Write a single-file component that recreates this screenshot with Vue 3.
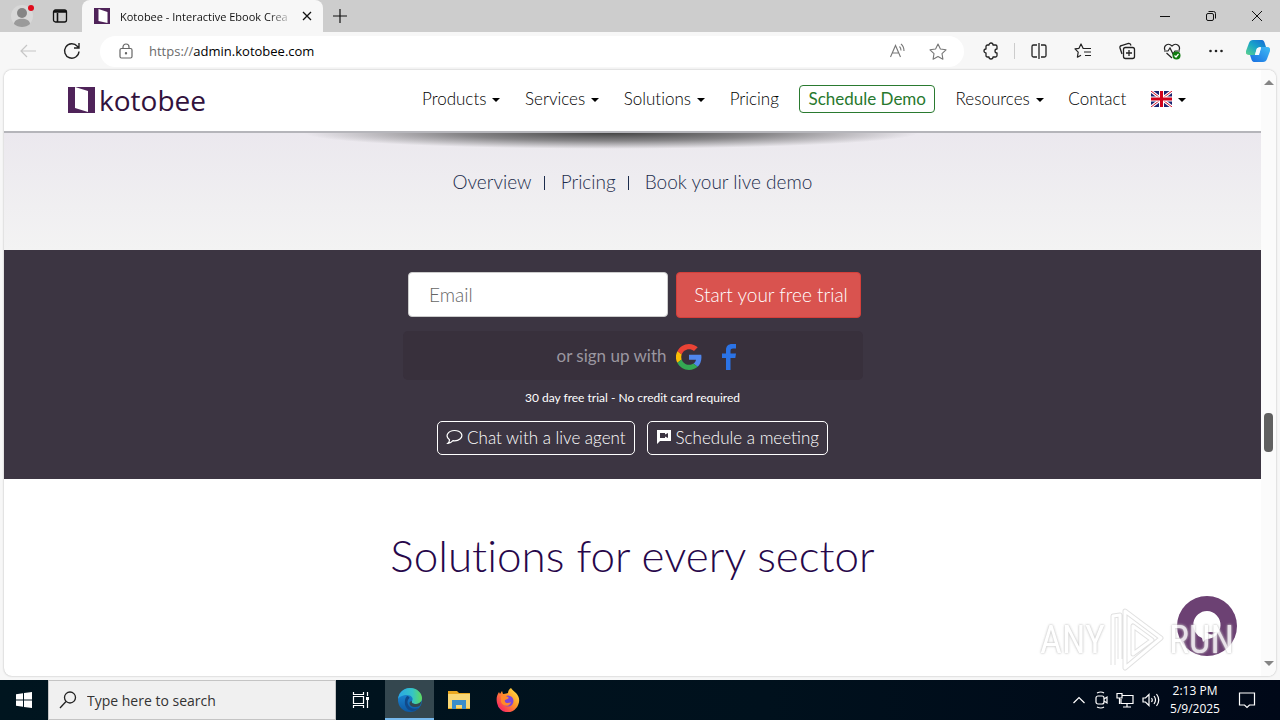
<template>
  <div class="desktop">
    <header class="tabs">
      <button class="icon-btn profile" aria-label="Profile">
        <svg width="26" height="26" viewBox="0 0 26 26">
          <circle cx="12" cy="13" r="11" fill="#d8d8d8" />
          <circle cx="12" cy="10" r="5" fill="#858585" />
          <path d="M4 21c0-7 16-7 16 0-4 4-12 4-16 0z" fill="#9a9a9a" />
          <circle cx="21" cy="5" r="3" fill="#e00b1c" />
        </svg>
      </button>
      <button class="icon-btn" aria-label="Tab actions">
        <svg width="16" height="16" viewBox="0 0 16 16" fill="none" stroke="#111" stroke-width="1.3">
          <rect x="1.5" y="2" width="13" height="12" rx="2" />
          <path d="M1.500 4h13M2 3h12M5.500 5v9" stroke-width="1.600" />
        </svg>
      </button>
      <div class="tab">
        <svg width="16" height="16" viewBox="0 0 16 16">
          <path d="M0 0h16v16H0z" fill="#4f2359" />
          <path d="M4.500 1l9 3v11l-9-2z" fill="#fff" />
        </svg>
        <span class="tab-title">Kotobee - Interactive Ebook Crea</span>
        <button class="icon-btn" aria-label="Close tab">
          <svg width="10" height="10" viewBox="0 0 10 10" stroke="#111" stroke-width="1.300"><path d="M1 1l8 8M9 1L1 9" /></svg>
        </button>
      </div>
      <button class="icon-btn new-tab" aria-label="New tab">
        <svg width="14" height="14" viewBox="0 0 14 14" stroke="#111" stroke-width="1.200"><path d="M7 0v14M0 7h14" /></svg>
      </button>
      <div class="window-controls">
        <button class="icon-btn" aria-label="Minimize">
          <svg width="12" height="12" viewBox="0 0 12 12" stroke="#111"><path d="M1 6.500h10" /></svg>
        </button>
        <button class="icon-btn" aria-label="Restore">
          <svg width="12" height="12" viewBox="0 0 12 12" fill="none" stroke="#111">
            <rect x="1.500" y="3.500" width="7" height="7" rx="1.500" />
            <path d="M3.500 1.500h5a2 2 0 0 1 2 2v5" />
          </svg>
        </button>
        <button class="icon-btn" aria-label="Close">
          <svg width="12" height="12" viewBox="0 0 12 12" stroke="#111"><path d="M1 1l10 10M11 1L1 11" /></svg>
        </button>
      </div>
    </header>

    <div class="toolbar">
      <button class="icon-btn back" aria-label="Back">
        <svg width="18" height="16" viewBox="0 0 18 16" fill="none" stroke="#c6c6c6" stroke-width="1.200"><path d="M17 8H2M8 2L2 8l6 6" /></svg>
      </button>
      <button class="icon-btn reload" aria-label="Refresh">
        <svg width="18" height="18" viewBox="0 0 18 18" fill="none" stroke="#222" stroke-width="1.400"><path d="M16 9.500A7.200 7.200 0 1 1 14.300 4.300L16 6M16 1v5h-5" /></svg>
      </button>
      <div class="address">
        <svg width="14" height="16" viewBox="0 0 14 16" fill="none" stroke="#666" stroke-width="1.200">
          <rect x="1" y="5.500" width="12" height="9.500" rx="1.500" />
          <path d="M4 5.500V4a3 3 0 0 1 6 0v1.500" />
          <circle cx="7" cy="10.300" r=".6" fill="#666" />
        </svg>
        <span class="url">https://<b>admin.kotobee.com</b></span>
        <button class="icon-btn" aria-label="Read aloud">
          <svg width="18" height="16" viewBox="0 0 18 16" fill="none" stroke="#777" stroke-width="1.100"><path d="M1.500 14L6.500 2.500l5 11.500M3.300 10h6.500M10.500 3.500q1.500 1.500 1.500 4M12 1q3 2.500 3 7" /></svg>
        </button>
        <button class="icon-btn" aria-label="Favorite">
          <svg width="18" height="17" viewBox="0 0 18 17" fill="none" stroke="#777" stroke-width="1.100" stroke-linejoin="round"><path d="M9 1l2.400 5 5.600.8-4 3.900.9 5.500L9 13.600l-4.900 2.600.9-5.500-4-3.900 5.600-.8z" /></svg>
        </button>
      </div>
      <div class="tools">
        <button class="icon-btn" aria-label="Extensions">
          <svg width="18" height="18" viewBox="0 0 18 18" fill="none" stroke="#222" stroke-width="1.300" stroke-linejoin="round"><path d="M5.500 3H7a2 2 0 0 1 4 0h2.500Q15 3 15 4.500V7a2 2 0 0 0 0 4v2.500q0 1.500-1.500 1.500H11a2 2 0 0 1-4 0H5.500Q4 15 4 13.500V11a2 2 0 0 1 0-4V4.500Q4 3 5.500 3z" /></svg>
        </button>
        <i class="tool-line"></i>
        <button class="icon-btn" aria-label="Split screen">
          <svg width="18" height="18" viewBox="0 0 18 18" fill="none" stroke="#222" stroke-width="1.300"><path d="M7 3H3.500A1.500 1.500 0 0 0 2 4.500v9A1.500 1.500 0 0 0 3.500 15H7M11 3h3.500A1.500 1.500 0 0 1 16 4.500v9a1.500 1.500 0 0 1-1.500 1.500H11M9 1v16" /></svg>
        </button>
        <button class="icon-btn" aria-label="Favorites">
          <svg width="18" height="18" viewBox="0 0 18 18" fill="none" stroke="#222" stroke-width="1.200" stroke-linejoin="round"><path d="M11 6.500H9.200L7 2 5 6.300l-4 .6 3.200 3.200-.8 5.100L7 13.200M10.500 6.500H17M10 10h7M11 13.500h6" /></svg>
        </button>
        <button class="icon-btn" aria-label="Collections">
          <svg width="18" height="18" viewBox="0 0 18 18" fill="none" stroke="#222" stroke-width="1.300"><rect x="5.500" y="5.500" width="11" height="11" rx="2" /><path d="M11 8v6M8 11h6M4 12L2 6q-.5-2 1.500-2.500l7-2q2-.3 2.500 2" /></svg>
        </button>
        <button class="icon-btn" aria-label="Browser essentials">
          <svg width="18" height="18" viewBox="0 0 18 18" fill="none" stroke="#222" stroke-width="1.200"><path d="M2 8C0 4 5 0 9 4c4-4 9 0 7 4M3.500 11L9 16M1 9h4l2-3 3 6 2-3h5" /><circle cx="13.500" cy="13.500" r="4" fill="#107c10" stroke="none" /><path d="M11.500 13.500l1.500 1.500 2.500-3" stroke="#fff" /></svg>
        </button>
        <button class="icon-btn" aria-label="More">
          <svg width="18" height="18" viewBox="0 0 18 18" fill="#222"><circle cx="3.500" cy="9" r="1.300" /><circle cx="9" cy="9" r="1.300" /><circle cx="14.500" cy="9" r="1.300" /></svg>
        </button>
      </div>
      <button class="icon-btn" aria-label="Copilot">
        <svg width="24" height="24" viewBox="0 0 24 24">
          <defs>
            <linearGradient id="cp1" x1="0" y1="1" x2="1" y2="0"><stop offset="0" stop-color="#5ed38b" /><stop offset=".5" stop-color="#18a5c8" /><stop offset="1" stop-color="#1667d8" /></linearGradient>
            <linearGradient id="cp2" x1="0" y1="1" x2="1" y2="0"><stop offset="0" stop-color="#176ce0" /><stop offset="1" stop-color="#40bdf5" /></linearGradient>
          </defs>
          <path d="M7 1h9q2 0 3 4l1 3h-6q-3 0-4 4l-1 4H3q-4 0-3-4L3 4q1-3 4-3z" fill="url(#cp1)" />
          <path d="M17 23H8q-2 0-3-4l-1-3h6q3 0 4-4l1-4h6q4 0 3 4l-3 8q-1 3-4 3z" fill="url(#cp2)" />
          <path d="M11 9h4l-2 7H9z" fill="#f5faff" />
        </svg>
      </button>
    </div>

    <div class="viewport">
      <main class="page">
        <header class="site-header">
          <a class="logo" href="#" aria-label="kotobee">
            <svg width="27" height="26" viewBox="0 0 27 26">
              <path d="M0 0h27v26H0z" fill="#4f2359" />
              <path d="M7 0l13 4v21L7 21z" fill="#fff" />
            </svg>
            <span>kotobee</span>
          </a>
          <nav class="site-nav">
            <a v-for="item in nav" :key="item.label" href="#" :class="{ demo: item.demo }">
              {{ item.label }}<i v-if="item.menu" class="caret"></i>
            </a>
            <a href="#" aria-label="Language">
              <svg width="21" height="16" viewBox="0 0 21 16">
                <path d="M0 0h21v16H0z" fill="#1b2370" />
                <path d="M0 0l21 16M21 0L0 16" stroke="#fff" stroke-width="3" />
                <path d="M0 0l21 16M21 0L0 16" stroke="#d3122e" />
                <path d="M10.500 0v16M0 8h21" stroke="#fff" stroke-width="5" />
                <path d="M10.500 0v16M0 8h21" stroke="#d0021b" stroke-width="3" />
              </svg>
              <i class="caret"></i>
            </a>
          </nav>
        </header>

        <section class="subnav">
          <div class="shade"></div>
          <a href="#">Overview</a><i></i><a href="#">Pricing</a><i></i><a href="#">Book your live demo</a>
        </section>

        <section class="signup">
          <form class="trial" @submit.prevent>
            <input v-model="email" type="email" placeholder="Email" aria-label="Email" />
            <button type="submit">Start your free trial</button>
          </form>
          <div class="social">
            <span>or sign up with</span>
            <a href="#" aria-label="Google">
              <svg width="26" height="26" viewBox="0 0 48 48">
                <path d="M24 9.500c3.500 0 6.700 1.200 9.200 3.600l6.900-6.900C35.900 2.400 30.500 0 24 0 14.600 0 6.500 5.400 2.600 13.200l8 6.200C12.400 13.700 17.700 9.500 24 9.500z" fill="#ea4335" />
                <path d="M47 24.500c0-1.600-.2-3.100-.4-4.500H24v9h12.900c-.6 3-2.300 5.500-4.700 7.200l7.700 6C44.400 38 47 31.800 47 24.500z" fill="#5086ec" />
                <path d="M10.500 28.600a14 14 0 0 1 0-9.200l-8-6.200a24 24 0 0 0 0 21.600z" fill="#fbbc05" />
                <path d="M24 48c6.500 0 11.900-2.100 15.900-5.800l-7.700-6c-2.200 1.500-4.900 2.300-8.200 2.300-6.300 0-11.600-4.200-13.500-9.900l-8 6.200C6.500 42.600 14.600 48 24 48z" fill="#34a853" />
              </svg>
            </a>
            <a href="#" aria-label="Facebook">
              <svg width="14" height="26" viewBox="0 0 14 26"><path d="M4 26V14H0V9.500h4V6c0-4 2.500-6 6-6h4v4.500h-3c-1.700 0-2.500.7-2.500 2.500v2.500H14l-.7 4.500H8.500v12z" fill="#2b73e6" /></svg>
            </a>
          </div>
          <p class="note">30 day free trial - No credit card required</p>
          <div class="actions">
            <button type="button">
              <svg width="17" height="16" viewBox="0 0 17 16" fill="none" stroke="#fff" stroke-width="1.200"><path d="M3.500 10.800C-1.500 7 2 1.500 8.500 1.500s9.500 5 5.500 8.500c-2 1.700-4.500 2-7 1.700Q5 14 2 14.300q1.500-1.300 1.500-3.500z" /></svg>
              Chat with a live agent
            </button>
            <button type="button">
              <svg width="16" height="16" viewBox="0 0 16 16"><path d="M1 1h14v11H4l-3 3z" fill="#fff" /><path d="M4 4h5v1.500L12 4v5L9 7.500V9H4z" fill="#3c3542" /></svg>
              Schedule a meeting
            </button>
          </div>
        </section>

        <section class="sectors">
          <h2>Solutions for every sector</h2>
        </section>

        <button class="chat" aria-label="Open chat">
          <svg width="60" height="60" viewBox="0 0 60 60">
            <circle cx="30" cy="30" r="30" fill="#6c4173" />
            <path d="M30 15a14 14 0 1 1-1 28l-3 3-1-4A14 14 0 0 1 30 15z" fill="#fff" />
            <path d="M29 36h10q-4 5-10 0z" fill="#6c4173" />
          </svg>
        </button>
      </main>
      <div class="scrollbar">
        <i class="arrow up"></i>
        <i class="before"></i>
        <i class="thumb"></i>
        <i class="after"></i>
        <i class="arrow down"></i>
      </div>
    </div>

    <div class="watermark">
      <span>ANY</span>
      <svg width="56" height="64" viewBox="0 0 56 64" fill="none" stroke-linejoin="round">
        <path d="M4 57V8l7-1v44M16 3l36 27L16 60zM24 18v28l19-14z" stroke="#dcdcdc" stroke-width="5" />
        <path d="M4 57V8l7-1v44M16 3l36 27L16 60zM24 18v28l19-14z" stroke="#fff" stroke-width="3" />
      </svg>
      <span>RUN</span>
    </div>

    <footer class="taskbar">
      <button class="task start" aria-label="Start">
        <svg width="16" height="16" viewBox="0 0 16 16" fill="#fff"><path d="M0 2.200l7-1v6.300H0zM8 1l8-1v7.500H8zM0 8.500h7v6.300l-7-1zM8 8.500h8V16l-8-1z" /></svg>
      </button>
      <label class="search">
        <svg width="18" height="18" viewBox="0 0 18 18" fill="none" stroke="#222" stroke-width="1.300"><circle cx="11" cy="6.500" r="5.500" /><path d="M7 10.500L1 17" /></svg>
        <input type="text" placeholder="Type here to search" aria-label="Type here to search" />
      </label>
      <button class="task" aria-label="Task view">
        <svg width="18" height="18" viewBox="0 0 18 18" fill="none" stroke="#fff" stroke-width="1.200"><path d="M1.500 1v2.500h10V1M1.500 17v-2.500h10V17M1.500 5.500h10v7h-10zM15.500 1v4M15.500 9v8" /><path d="M14 6h3v3h-3z" fill="#fff" stroke="none" /></svg>
      </button>
      <button class="task active" aria-label="Microsoft Edge">
        <svg width="24" height="24" viewBox="0 0 24 24">
          <defs>
            <linearGradient id="ed1"><stop offset="0" stop-color="#2aa7e6" /><stop offset=".6" stop-color="#35c4c6" /><stop offset="1" stop-color="#5fdb5d" /></linearGradient>
            <linearGradient id="ed2" x1="0" y1="0" x2="0" y2="1"><stop offset="0" stop-color="#2091dd" /><stop offset="1" stop-color="#0c59a4" /></linearGradient>
          </defs>
          <circle cx="12" cy="12" r="12" fill="url(#ed2)" />
          <path d="M0 11C1 4 6 0 12 0c7 0 12 5 12 10 0 4-3 6-6 6-3 0-5-1-4-3 2-3-1-6-5-6-4 0-8 2-9 4z" fill="url(#ed1)" />
          <path d="M14 13c-1 2 1 3 4 3 2 0 4-1 5.500-3-.3 2-1 3.500-2 5-4 2-10 1-10-3 0-1 1-2 2.500-2z" fill="#34474f" />
          <path d="M9 8c-3 3-4 13 5 15 3 0 5-1 6.500-3-6 2-11-1-11-6 0-2 1-3 2-4 0-1-1-2-2.500-2z" fill="#114a8b" />
        </svg>
      </button>
      <button class="task" aria-label="File Explorer">
        <svg width="22" height="20" viewBox="0 0 22 20"><path d="M0 1h9l2 2h11v16H0z" fill="#e9a820" /><path d="M0 4h22v14H0z" fill="#f8d775" /><path d="M4 10h14v9h-4v-4H8v4H4z" fill="#3b8dca" /></svg>
      </button>
      <button class="task" aria-label="Firefox">
        <svg width="24" height="24" viewBox="0 0 24 24">
          <defs><linearGradient id="ff" x1="1" y1="0" x2="0" y2="1"><stop offset="0" stop-color="#fff14a" /><stop offset=".45" stop-color="#ff9428" /><stop offset=".8" stop-color="#fa3758" /><stop offset="1" stop-color="#e01cb0" /></linearGradient></defs>
          <path d="M15 0c1 2 3 3 5 5 3 3 4 7 2.500 11A11 11 0 0 1 1 15C0 10 1 7 3 4l1 2 2-3 1 3c3 0 4-1 5-1 0-2 1-4 3-5z" fill="url(#ff)" />
          <circle cx="12" cy="13" r="5.500" fill="#7b46d9" />
          <path d="M5 8c3-1 5 0 7 1 2 2-1 2-3 3-1 3 3 4 6 2-1 5-8 5-10 0z" fill="#ff8a2a" />
        </svg>
      </button>
      <div class="tray">
        <svg width="14" height="20" viewBox="0 0 14 20" fill="none" stroke="#fff" stroke-width="1.200"><path d="M1.500 13L7 7.500l5.500 5.500" /></svg>
        <svg width="14" height="20" viewBox="0 0 14 20" fill="none" stroke="#fff" stroke-width="1.200"><rect x="2" y="6" width="8" height="8" rx="2" /><path d="M10 9l3-2v6l-3-2M3 3q4-2 7 0M3 17q4 2 7 0" /></svg>
        <svg width="18" height="20" viewBox="0 0 18 20" fill="none" stroke="#fff" stroke-width="1.200"><path d="M6 5.500h11v8H5V9M11 13.500V17M7 17h8M1 3.500h5V8H1zM3.500 8v6" /></svg>
        <svg width="18" height="20" viewBox="0 0 18 20" fill="none" stroke="#fff" stroke-width="1.200"><path d="M1 8h2.500L7 4.500v11L3.500 12H1zM9.500 8q1.500 2 0 4M12 6q3 4 0 8M14.500 4q4.500 6 0 12" /></svg>
      </div>
      <div class="clock"><span>2:13 PM</span><span>5/9/2025</span></div>
      <button class="task notify" aria-label="Notifications">
        <svg width="18" height="18" viewBox="0 0 18 18" fill="none" stroke="#fff" stroke-width="1.200"><path d="M1.500 2h15v12h-5L9 16.500 6.500 14h-5z" /></svg>
      </button>
    </footer>
  </div>
</template>

<script setup>
import { ref } from 'vue'

const email = ref('')
const nav = [
  { label: 'Products', menu: true },
  { label: 'Services', menu: true },
  { label: 'Solutions', menu: true },
  { label: 'Pricing' },
  { label: 'Schedule Demo', demo: true },
  { label: 'Resources', menu: true },
  { label: 'Contact' }
]
</script>

<style>
body {
  margin: 0;
}
</style>

<style scoped>
* {
  box-sizing: border-box;
}
.desktop {
  display: flex;
  flex-direction: column;
  height: 100vh;
  position: relative;
  overflow: hidden;
  background: #f7f7f7;
  font-family: "Open Sans", "Noto Sans", sans-serif;
  font-size: 12px;
  color: #111;
}
button {
  font-family: inherit;
  cursor: pointer;
}
svg {
  flex: none;
  display: block;
}
a {
  color: inherit;
  text-decoration: none;
}
.icon-btn {
  display: flex;
  align-items: center;
  justify-content: center;
  padding: 0;
  border: 0;
  background: none;
}

/* browser chrome */
.tabs {
  display: flex;
  align-items: center;
  flex: none;
  height: 32px;
  background: #cdcdcd;
}
.profile {
  margin: 0 16px 0 10px;
}
.tab {
  display: flex;
  align-items: center;
  align-self: stretch;
  width: 241px;
  margin-left: 14px;
  padding: 0 11px 0 12px;
  border-radius: 8px 8px 0 0;
  background: #f7f7f7;
}
.tab-title {
  flex: 1;
  min-width: 0;
  margin: 0 8px 0 10px;
  overflow: hidden;
  white-space: nowrap;
  font-size: 11px;
  mask-image: linear-gradient(90deg, #000 85%, transparent);
}
.new-tab {
  margin-left: 10px;
}
.window-controls {
  display: flex;
  gap: 34px;
  margin-left: auto;
  padding-right: 17px;
}
.toolbar {
  display: flex;
  align-items: center;
  flex: none;
  height: 38px;
  padding: 0 10px 0 19px;
}
.reload {
  margin: 0 19px 0 26px;
}
.address {
  display: flex;
  align-items: center;
  flex: 1;
  gap: 22px;
  height: 31px;
  padding: 0 17px 0 19px;
  border-radius: 16px;
  background: #fff;
}
.url {
  flex: 1;
  margin-left: -6px;
  font-size: 13px;
  color: #6b6b6b;
}
.url b {
  font-weight: 400;
  color: #000;
}
.tools {
  display: flex;
  align-items: center;
  justify-content: space-between;
  width: 243px;
  margin: 0 21px 0 18px;
}
.tool-line {
  width: 1px;
  height: 16px;
  margin: 0 -12px;
  background: #ccc;
}

/* page */
.viewport {
  display: flex;
  flex: 1;
  min-height: 0;
  margin: 0 4px 4px;
  border-radius: 8px;
  overflow: hidden;
  background: #fff;
  box-shadow: 0 0 2px #aaa;
}
.page {
  position: relative;
  flex: 1;
  font-family: Lato, "Open Sans", sans-serif;
  font-weight: 300;
  font-variant-ligatures: none;
}
.site-header {
  display: flex;
  align-items: center;
  justify-content: space-between;
  height: 63px;
  padding: 0 75px 4px 64px;
  border-bottom: 2px solid #b5b5ba;
  background: #fff;
}
.logo {
  display: flex;
  align-items: center;
  gap: 4px;
  height: 32px;
  padding-top: 2px;
  font: 400 28px/32px "Open Sans", sans-serif;
  color: #32123d;
}
.site-nav {
  display: flex;
  align-items: center;
  justify-content: space-between;
  width: 764px;
  font-size: 17px;
  line-height: 26px;
  color: #000;
}
.site-nav a {
  display: flex;
  align-items: center;
}
.site-nav .demo {
  margin: 0 -4px;
  padding: 0 8px;
  border: 1px solid #2a7a30;
  border-radius: 4px;
  font-weight: 400;
  color: #27782d;
}
.caret {
  margin: 3px 0 0 6px;
  border: 4px solid transparent;
  border-top-color: #000;
  border-bottom: 0;
}
.subnav {
  display: flex;
  justify-content: center;
  position: relative;
  height: 117px;
  padding-top: 37px;
  background: linear-gradient(#ebe8ee, #f3f3f3);
  font-size: 19px;
  line-height: 24px;
  color: #1c2c4c;
}
.shade {
  position: absolute;
  top: 0;
  left: 50%;
  width: 620px;
  height: 16px;
  margin-left: -332px;
  background: radial-gradient(ellipse at top, #444 0, #4449 35%, transparent 70%);
}
.subnav i {
  width: 1px;
  height: 14px;
  margin: 6px 16px 0 12px;
  background: #1c2c4c;
}
.signup {
  display: flex;
  flex-direction: column;
  align-items: center;
  height: 229px;
  padding-top: 22px;
  background: #3c3542;
  color: #fff;
}
.trial {
  display: flex;
  gap: 8px;
  padding-left: 4px;
}
.trial input {
  width: 260px;
  height: 45px;
  padding: 0 20px;
  border: 1px solid #ccc;
  border-radius: 4px;
  background: #fff;
  font: inherit;
  font-size: 19px;
}
.trial input::placeholder {
  color: #666;
}
.trial button {
  width: 185px;
  height: 46px;
  padding: 0 0 2px 5px;
  border: 1px solid #d43f3a;
  border-radius: 4px;
  background: #d9534f;
  font-size: 19px;
  font-weight: 300;
  color: #fff;
}
.social {
  display: flex;
  align-items: center;
  justify-content: center;
  width: 460px;
  height: 49px;
  margin-top: 13px;
  padding-left: 38px;
  border-radius: 5px;
  background: #38303c;
  font-size: 17px;
  font-weight: 400;
  color: #9b97a0;
}
.social a {
  margin: 2px 10px 0;
}
.note {
  margin: 9px 0 14px;
  font-size: 12px;
  font-weight: 400;
  line-height: 18px;
}
.actions {
  display: flex;
  gap: 12px;
}
.actions button {
  display: flex;
  align-items: center;
  gap: 4px;
  height: 34px;
  padding: 0 8px 2px;
  border: 1px solid #fff;
  border-radius: 5px;
  background: none;
  font-size: 17px;
  font-weight: 300;
  color: #fff;
}
.sectors {
  padding-top: 48px;
  text-align: center;
}
.sectors h2 {
  margin: 0;
  font-size: 44px;
  font-weight: 300;
  line-height: 56px;
  color: #27074a;
}
.chat {
  position: absolute;
  right: 24px;
  bottom: 20px;
  padding: 0;
  border: 0;
  background: none;
}
.scrollbar {
  display: flex;
  flex-direction: column;
  align-items: center;
  width: 15px;
  padding: 10px 0;
  background: #fbfbfb;
}
.arrow {
  border: 5px solid transparent;
}
.arrow.up {
  border-top: 0;
  border-bottom-color: #858585;
}
.arrow.down {
  border-bottom: 0;
  border-top-color: #858585;
}
.before {
  flex: 328;
}
.thumb {
  width: 9px;
  height: 39px;
  border-radius: 4px;
  background: #606060;
}
.after {
  flex: 209;
}
.watermark {
  display: flex;
  align-items: center;
  gap: 4px;
  position: absolute;
  right: 46px;
  bottom: 48px;
  font: 400 38px/44px "Liberation Sans Narrow", "Roboto Condensed", Roboto, sans-serif;
  color: #fff;
  text-shadow: 0 0 2px #bbb, 0 0 3px #ccc;
  opacity: .85;
  pointer-events: none;
}

/* taskbar */
.taskbar {
  display: flex;
  align-items: center;
  flex: none;
  height: 40px;
  background: linear-gradient(90deg, #00151f, #00111d 60%, #000818);
  color: #fff;
}
.task {
  display: flex;
  align-items: center;
  justify-content: center;
  width: 49px;
  height: 40px;
  padding: 0;
  border: 0;
  background: none;
}
.task.start {
  width: 48px;
}
.task.active {
  border-top: 2px solid #34474f;
  border-bottom: 2px solid #76b9ed;
  background: #34474f;
}
.search {
  display: flex;
  align-items: center;
  gap: 10px;
  width: 288px;
  height: 40px;
  padding: 0 10px;
  border: 1px solid #c4c4c4;
  background: #f0f0f0;
}
.search input {
  flex: 1;
  min-width: 0;
  padding: 0;
  border: 0;
  background: none;
  font: inherit;
  font-size: 14px;
}
.search input::placeholder {
  color: #333;
}
.tray {
  display: flex;
  align-items: center;
  gap: 8px;
  margin-left: auto;
}
.clock {
  display: flex;
  flex-direction: column;
  align-items: center;
  width: 70px;
  line-height: 18px;
}
.notify {
  width: 34px;
  margin-right: 16px;
}
</style>
